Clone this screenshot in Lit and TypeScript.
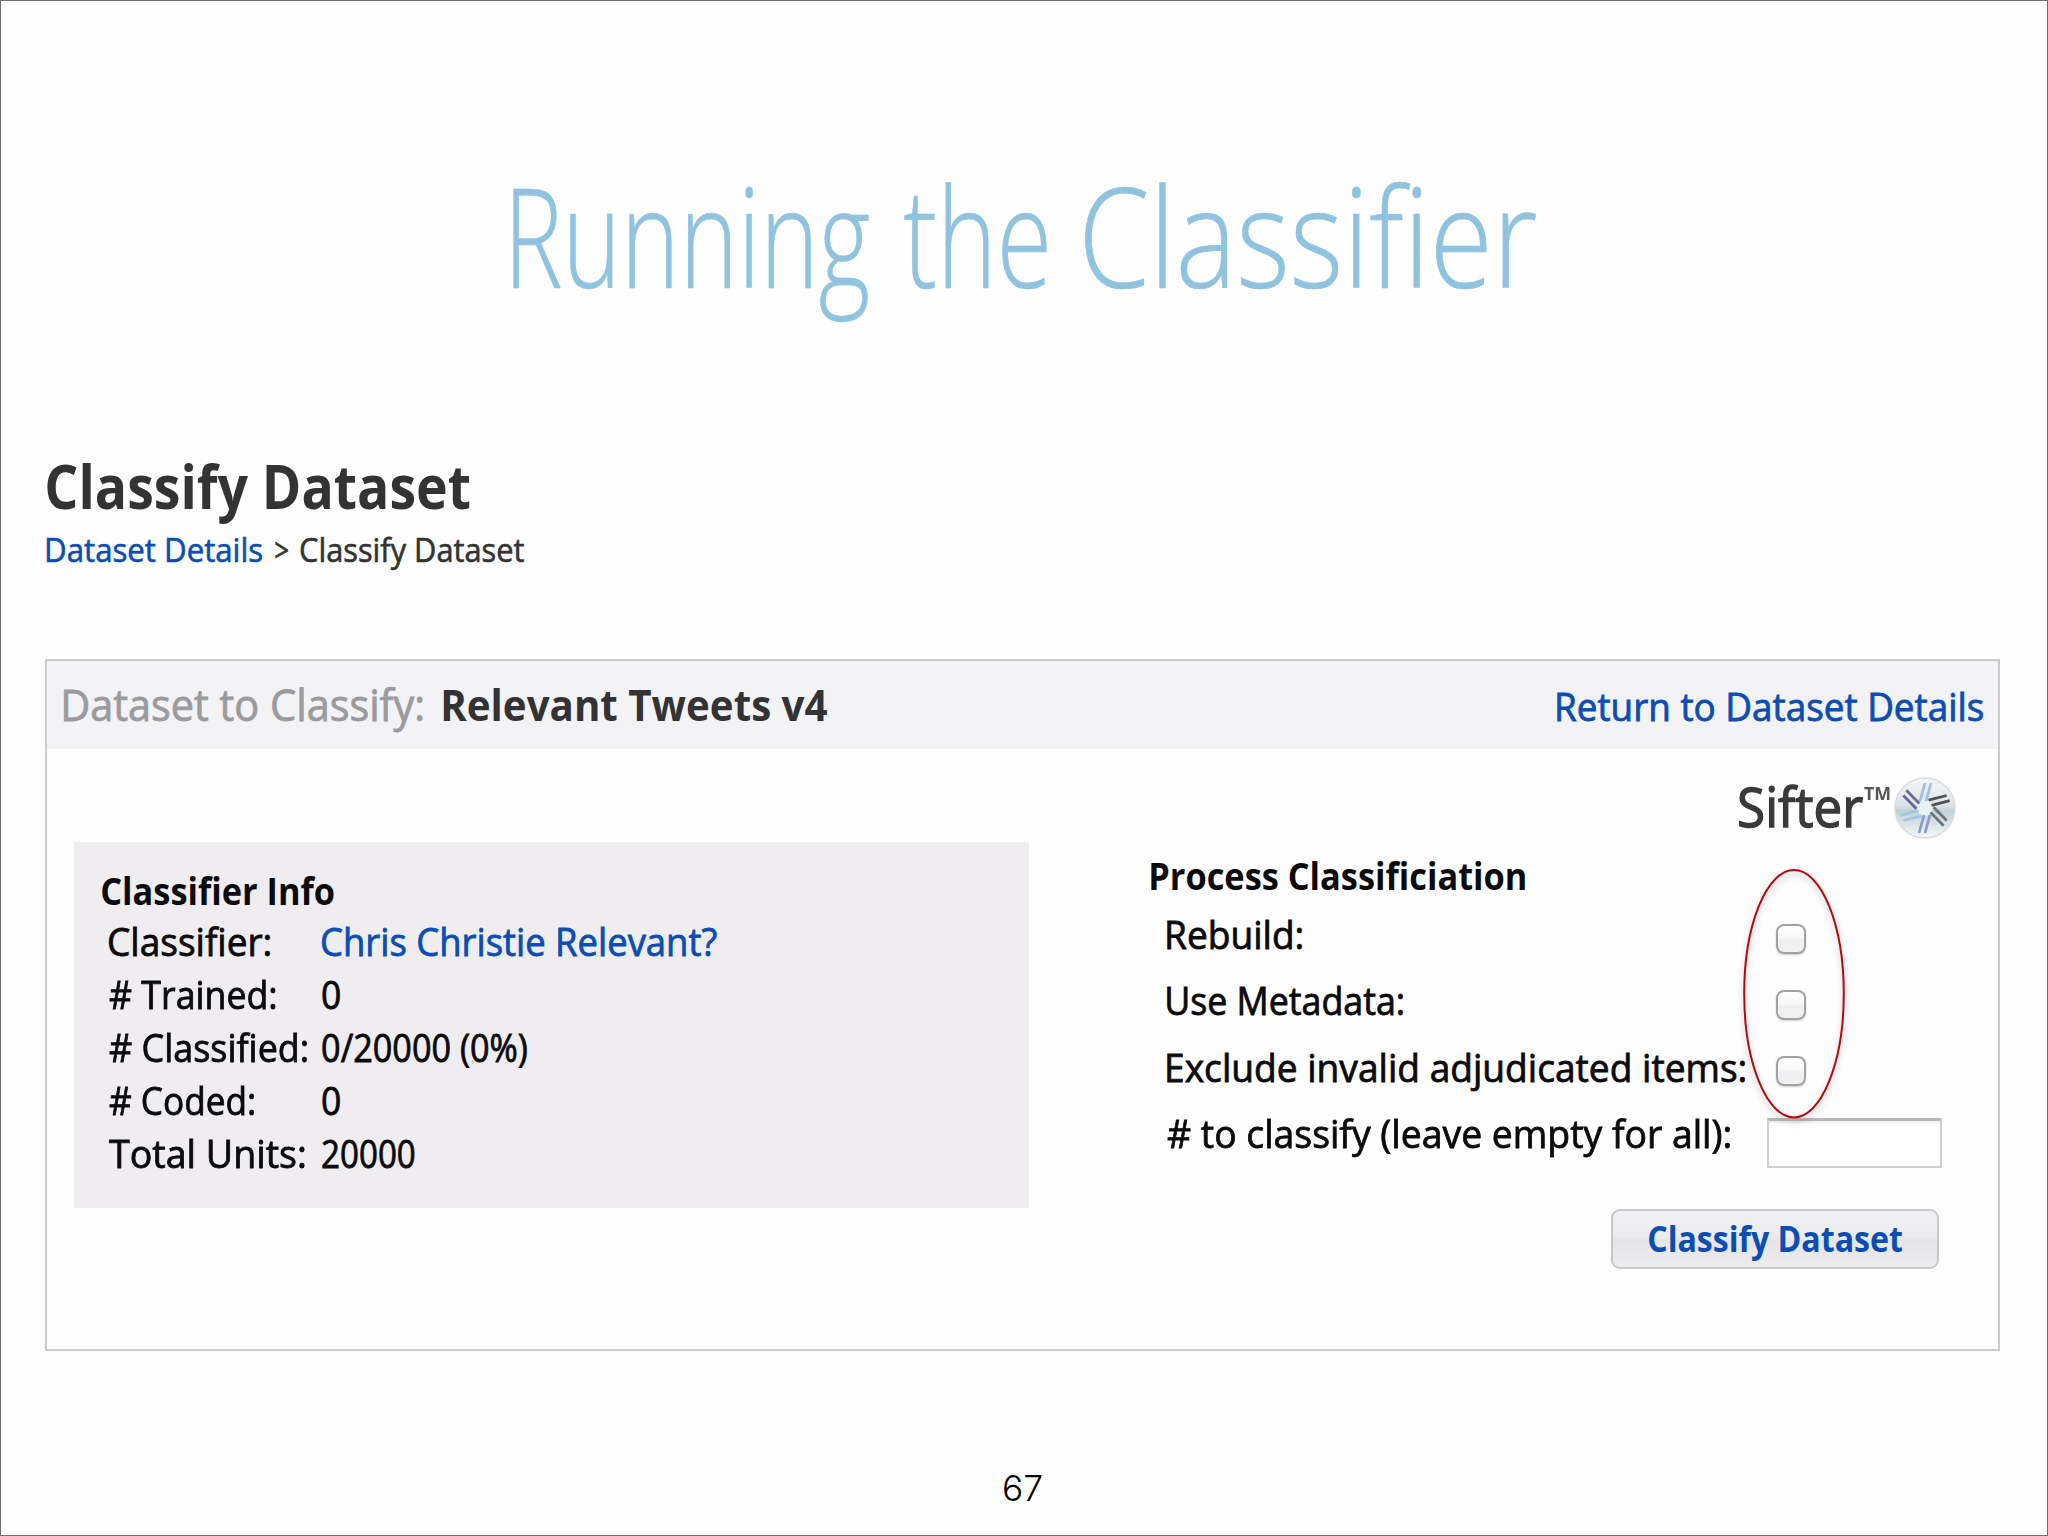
import { LitElement, html, css, svg } from "lit";
import { customElement, property } from "lit/decorators.js";
import { styleMap } from "lit/directives/style-map.js";

/** One line of text whose ink spans exactly `width` pixels. */
@customElement("fit-text")
class FitText extends LitElement {
  @property() text = "";
  @property({ type: Number }) width = 100;
  private scale = 1;
  private shift = 0;

  static styles = css`
    :host { display: block; flex: none; white-space: pre; }
    .ink { display: inline-block; transform-origin: 0 50%; font-variant-ligatures: none; }
  `;

  firstUpdated() {
    const el = this.renderRoot.querySelector(".ink") as HTMLElement;
    const cs = getComputedStyle(el);
    const ctx = document.createElement("canvas").getContext("2d")!;
    ctx.font = `${cs.fontWeight} ${cs.fontSize} ${cs.fontFamily}`;
    const m = ctx.measureText(this.text);
    const left = -m.actualBoundingBoxLeft;
    const right = m.width - m.actualBoundingBoxRight;
    const advance = el.getBoundingClientRect().width;
    this.scale = this.width / (advance - left - right);
    this.shift = -left * this.scale;
    this.requestUpdate();
  }

  render() {
    return html`<style>:host { width: ${this.width}px; }</style><span class="ink"
      style=${styleMap({ transform: `translateX(${this.shift}px) scaleX(${this.scale})` })}>${this.text}</span>`;
  }
}

const stats = [
  { label: "Classifier:", w: 161.5, value: "Chris Christie Relevant?", vw: 395, link: true },
  { label: "# Trained:", w: 167, value: "0", vw: 18 },
  { label: "# Classified:", w: 198.5, value: "0/20000 (0%)", vw: 205 },
  { label: "# Coded:", w: 145.5, value: "0", vw: 18 },
  { label: "Total Units:", w: 196, value: "20000", vw: 92.5 },
];

const options = [
  { label: "Rebuild:", w: 135.5 },
  { label: "Use Metadata:", w: 236.5 },
  { label: "Exclude invalid adjudicated items:", w: 578.5 },
];

/** Six pairs of blades round the hub of the logo: angle and colour. */
const blades: [number, string][] = [
  [0, "#9cc0e2"], [60, "#4c5258"], [120, "#6a747c"],
  [180, "#869fcc"], [240, "#9cc6e4"], [300, "#6468a0"],
];

@customElement("app-root")
class AppRoot extends LitElement {
  static styles = css`
    :host { display: block; }
    * { box-sizing: border-box; }
    .slide {
      position: relative; width: 2048px; height: 1536px; border: 1px solid #6e6e6e;
      background: #fefefe; overflow: hidden; display: flex; flex-direction: column;
      font-family: "Open Sans", "Noto Sans", sans-serif; color: #0b0a0d;
    }
    .title {
      display: flex; padding: 133px 0 0 512px; height: 333px; color: #8fc3df;
      font-size: 138px; font-weight: 300; line-height: 200px; -webkit-text-stroke: 0.6px;
    }
    .t2 { margin-left: 34.6px; }
    .t3 { margin-left: 39px; }
    .heading { margin: 117px 0 0 45.8px; font-size: 60px; line-height: 70px; font-weight: 700; color: #333; }
    .crumbs { display: flex; margin: 7px 0 0 45.8px; font-size: 32px; line-height: 44px; color: #333; -webkit-text-stroke: 0.6px; }
    .gt { margin: 0 12px 0 13px; }
    .link { color: #0a4db5; }
    .panel { margin: 87px 0 0 44px; width: 1955px; height: 692px; border: 2px solid #cbcacd; }
    .bar { display: flex; justify-content: space-between; height: 88px; background: #f3f2f5; padding: 0 15px 0 16.5px; line-height: 60px; }
    .name { display: flex; gap: 20.5px; font-size: 43px; padding-top: 14px; }
    .grey { color: #9b9b9d; -webkit-text-stroke: 0.8px; }
    .strong { color: #333235; font-weight: 700; }
    .return { font-size: 37.5px; padding-top: 16px; -webkit-text-stroke: 0.8px; }
    .body { display: flex; font-size: 37.5px; }
    .info { margin: 93px 0 0 27px; width: 955px; height: 366px; background: #efedf0; padding: 24.5px 0 0 27.5px; }
    .sub { line-height: 48px; font-weight: 700; }
    .stat { display: grid; grid-template-columns: 212.7px auto; padding-left: 7.5px; line-height: 53.1px; -webkit-text-stroke: 0.8px; }
    .side { margin: 28px 0 0 122px; width: 805px; }
    .brand { display: flex; justify-content: flex-end; height: 63px; }
    .word { font-size: 54px; line-height: 60px; color: #3b393b; margin-top: -1px; -webkit-text-stroke: 1.4px; }
    .tm { font-size: 17px; line-height: 20px; font-weight: 700; color: #555; margin: 7px 4px 0 1px; }
    .orb { width: 62px; height: 62px; display: block; }
    .process { line-height: 52px; height: 50px; margin-top: 10px; }
    .option { display: grid; grid-template-columns: 599.5px 1fr; padding-left: 15.5px; line-height: 70.4px; height: 66.4px; -webkit-text-stroke: 0.8px; }
    .box {
      width: 30px; height: 30px; margin: 23.5px 0 0 9.5px; border-radius: 8px; border: 2px solid #a3a1a5;
      background: linear-gradient(#fff, #f8f8f8 45%, #efeff1 55%, #f1f1f2); box-shadow: 0 1px 2px #0003;
    }
    .field { width: 175px; height: 50px; margin: 19px 0 0 1px; border: 2px solid #d0cfd2; border-top: 3px solid #b9b8bb; background: #fff; box-shadow: inset 0 2px 2px #0001; }
    .button {
      margin: 43px 0 0 459.5px; width: 328.5px; height: 60.5px; border: 2px solid #c9c8cb; border-radius: 9px;
      background: linear-gradient(#f1f0f2, #ebeaec 48%, #e5e4e6 52%, #ecebed); font: inherit; font-size: 35.5px;
      font-weight: 700; line-height: 50px; display: flex; padding: 2px 0 0 36px; color: #0a4db5;
    }
    .ring { position: absolute; left: 1732px; top: 858px; width: 130px; height: 280px; filter: drop-shadow(0 4px 3px #0004); }
    .page { position: absolute; left: 1003px; top: 1463px; font-family: Inter, "Liberation Sans", sans-serif; font-weight: 300; font-size: 36px; line-height: 48px; color: #000; }
  `;

  render() {
    return html`<div class="slide">
      <div class="title">
        <fit-text text="Running" .width=${356}></fit-text>
        <fit-text class="t2" text="the" .width=${142.4}></fit-text>
        <fit-text class="t3" text="Classifier" .width=${451}></fit-text>
      </div>
      <fit-text class="heading" text="Classify Dataset" .width=${423}></fit-text>
      <div class="crumbs">
        <fit-text class="link" text="Dataset Details" .width=${215}></fit-text>
        <fit-text class="gt" text=">" .width=${13}></fit-text>
        <fit-text text="Classify Dataset" .width=${224}></fit-text>
      </div>
      <div class="panel">
        <div class="bar">
          <div class="name">
            <fit-text class="grey" text="Dataset to Classify:" .width=${359}></fit-text>
            <fit-text class="strong" text="Relevant Tweets v4" .width=${384}></fit-text>
          </div>
          <fit-text class="link return" text="Return to Dataset Details" .width=${426.5}></fit-text>
        </div>
        <div class="body">
          <div class="info">
            <fit-text class="sub" text="Classifier Info" .width=${232}></fit-text>
            ${stats.map((s) => html`<div class="stat">
              <fit-text .text=${s.label} .width=${s.w}></fit-text>
              <fit-text class=${s.link ? "link" : ""} .text=${s.value} .width=${s.vw}></fit-text>
            </div>`)}
          </div>
          <div class="side">
            <div class="brand">
              <fit-text class="word" text="Sifter" .width=${124}></fit-text>
              <fit-text class="tm" text="TM" .width=${26}></fit-text>
              ${this.orb()}
            </div>
            <fit-text class="sub process" text="Process Classificiation" .width=${374}></fit-text>
            ${options.map((o) => html`<div class="option">
              <fit-text .text=${o.label} .width=${o.w}></fit-text><span class="box"></span>
            </div>`)}
            <div class="option">
              <fit-text text="# to classify (leave empty for all):" .width=${563.5}></fit-text>
              <span class="field"></span>
            </div>
            <button class="button"><fit-text text="Classify Dataset" .width=${253.5}></fit-text></button>
          </div>
        </div>
      </div>
      <svg class="ring" viewBox="0 0 130 280">
        <ellipse cx="61" cy="134.7" rx="49.8" ry="123.7" fill="none" stroke="#b5090d" stroke-width="2"></ellipse>
      </svg>
      <fit-text class="page" text="67" .width=${38}></fit-text>
    </div>`;
  }

  private orb() {
    return html`<svg class="orb" viewBox="-31 -31 62 62">
      <defs>
        <linearGradient id="g" x1="0" y1="0" x2="0" y2="1">
          <stop offset="0" stop-color="#f5f5f6"></stop>
          <stop offset=".45" stop-color="#dfe3e6"></stop>
          <stop offset=".55" stop-color="#c2cfd7"></stop>
          <stop offset="1" stop-color="#f6f8f9"></stop>
        </linearGradient>
      </defs>
      <circle r="30" fill="url(#g)" stroke="#d9dcde" stroke-width="1.5"></circle>
      <circle r="8" fill="#e9f1f5"></circle>
      ${blades.map(([a, c]) => svg`<g transform="rotate(${a})" stroke=${c} stroke-width="2.8">
        <path d="M-5 -7 L0 -25 M1 -7 L6 -25"></path>
      </g>`)}
    </svg>`;
  }
}
